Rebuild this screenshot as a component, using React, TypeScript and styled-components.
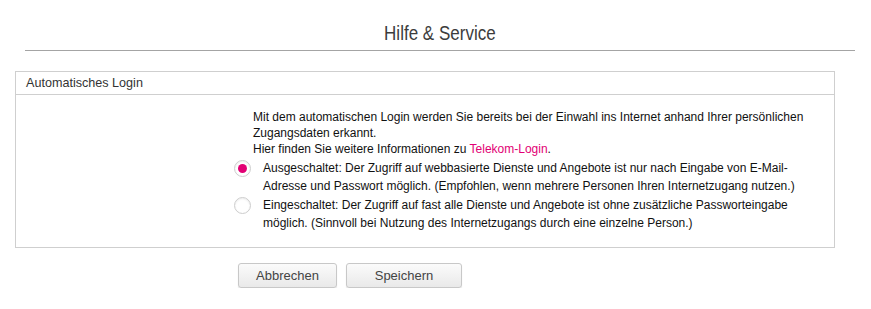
import * as React from 'react'
import styled, { createGlobalStyle } from 'styled-components'

const GlobalStyle = createGlobalStyle`
  body {
    margin: 0;
    background: #fff;
    font-family: 'Liberation Sans', Arial, sans-serif;
  }
`

const Page = styled.div`
  width: 871px;
  padding-top: 20px;
`

const TitleBar = styled.div`
  margin: 0 16px 0 25px;
  border-bottom: 1px solid #a4a4a4;
  text-align: center;
  padding-bottom: 4px;
`

// no narrow font installed, so the condensed look is squeezed horizontally
const Title = styled.h1`
  display: inline-block;
  margin: 0;
  font-weight: normal;
  font-size: 21px;
  line-height: 26px;
  color: #3c3c3c;
  transform: scaleX(0.81);
`

const Panel = styled.section`
  margin: 20px 0 0 15px;
  width: 818px;
  border: 1px solid #cfcfcf;
`

const PanelHead = styled.div`
  height: 22px;
  line-height: 22px;
  padding-left: 10px;
  border-bottom: 1px solid #cfcfcf;
  font-size: 12.6px;
  color: #333;
`

const PanelBody = styled.div`
  padding: 14px 20px 14px 218px;
  font-size: 12px;
  color: #111;
`

const Intro = styled.p`
  margin: 0 0 2px 19px;
  line-height: 16px;
  width: 585px;
`

const Link = styled.a`
  color: #e20074;
  text-decoration: none;
`

const Option = styled.label`
  display: flex;
  align-items: flex-start;
  gap: 12px;
  margin-bottom: 1px;
  width: 592px;
`

const Radio = styled.span<{ $checked?: boolean }>`
  flex: none;
  position: relative;
  width: 15px;
  height: 15px;
  margin-top: 1px;
  border-radius: 50%;
  border: 1px solid #cdcdcd;
  background: #fff;
  box-shadow: inset 0 1px 2px rgba(0, 0, 0, 0.08);

  &::after {
    content: '';
    display: ${p => (p.$checked ? 'block' : 'none')};
    position: absolute;
    left: 3px;
    top: 3px;
    width: 9px;
    height: 9px;
    border-radius: 50%;
    background: #e20074;
  }
`

const OptionText = styled.span`
  line-height: 18px;
`

const Actions = styled.div`
  display: flex;
  gap: 9px;
  margin: 15px 0 0 238px;
`

const Button = styled.button<{ $width: number }>`
  width: ${p => p.$width}px;
  height: 25px;
  border: 1px solid #c8c8c8;
  border-radius: 3px;
  background: linear-gradient(#fbfbfb, #e9e9e9);
  box-shadow: 0 1px 1px rgba(0, 0, 0, 0.12);
  font-family: 'Liberation Sans', Arial, sans-serif;
  font-size: 13px;
  color: #444;
  padding: 0;
  cursor: pointer;
`

const App: React.FC = () => {
  return (
    <Page>
      <GlobalStyle />
      <TitleBar>
        <Title>Hilfe &amp; Service</Title>
      </TitleBar>
      <Panel>
        <PanelHead>Automatisches Login</PanelHead>
        <PanelBody>
          <Intro>
            Mit dem automatischen Login werden Sie bereits bei der Einwahl ins Internet anhand Ihrer persönlichen
            Zugangsdaten erkannt.
            <br />
            Hier finden Sie weitere Informationen zu <Link href='#'>Telekom-Login</Link>.
          </Intro>
          <Option>
            <Radio $checked />
            <OptionText>
              Ausgeschaltet: Der Zugriff auf webbasierte Dienste und Angebote ist nur nach Eingabe von E-Mail-
              Adresse und Passwort möglich. (Empfohlen, wenn mehrere Personen Ihren Internetzugang nutzen.)
            </OptionText>
          </Option>
          <Option>
            <Radio />
            <OptionText>
              Eingeschaltet: Der Zugriff auf fast alle Dienste und Angebote ist ohne zusätzliche Passworteingabe
              möglich. (Sinnvoll bei Nutzung des Internetzugangs durch eine einzelne Person.)
            </OptionText>
          </Option>
        </PanelBody>
      </Panel>
      <Actions>
        <Button $width={99}>Abbrechen</Button>
        <Button $width={116}>Speichern</Button>
      </Actions>
    </Page>
  )
}

export default App
